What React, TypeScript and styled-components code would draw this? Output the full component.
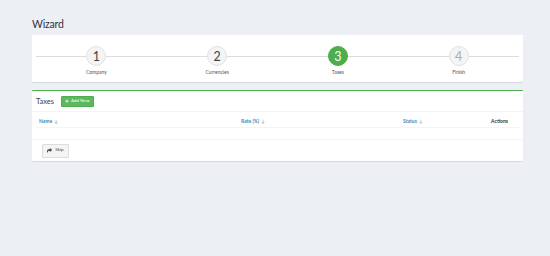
import styled, { createGlobalStyle } from "styled-components";
import { FaPlus, FaShare } from "react-icons/fa";

const GlobalStyle = createGlobalStyle`
  body {
    margin: 0;
    background: #ecf0f5;
    font-family: Lato, "Liberation Sans", sans-serif;
    color: #333;
  }
`;

const Page = styled.div`
  width: 491px;
  padding: 17px 0 0 32px;
`;

const PageTitle = styled.h1`
  margin: 0 0 4px;
  font-size: 10.5px;
  line-height: 14px;
  font-weight: 400;
  letter-spacing: -0.2px;
`;

const Box = styled.div<{ $accent?: string }>`
  background: #fff;
  border-top: ${(p) => (p.$accent ? `1px solid ${p.$accent}` : "none")};
  border-radius: 1px;
  box-shadow: 0 1px 1px rgba(0, 0, 0, 0.1);
  margin-bottom: 8px;
`;

const Steps = styled.div`
  display: grid;
  grid-template-columns: repeat(4, 1fr);
  padding: 11px 4px 7px;
`;

const Step = styled.div`
  position: relative;
  display: flex;
  flex-direction: column;
  align-items: center;

  &::before {
    content: "";
    position: absolute;
    left: 0;
    right: 0;
    top: 10px;
    height: 1px;
    background: #ddd;
  }
`;

const Circle = styled.div<{ $active?: boolean; $muted?: boolean }>`
  position: relative;
  z-index: 1;
  width: 18px;
  height: 18px;
  border-radius: 50%;
  display: flex;
  align-items: center;
  justify-content: center;
  font-size: 12.5px;
  background: ${(p) => (p.$active ? "#4cae4c" : "#f4f4f4")};
  border: 1px solid ${(p) => (p.$active ? "#4cae4c" : "#e2e2e2")};
  color: ${(p) => (p.$active ? "#fff" : p.$muted ? "#aaa" : "#444")};
`;

const StepLabel = styled.div`
  margin-top: 3px;
  font-size: 5px;
  line-height: 6px;
  color: #555;
`;

const BoxHeader = styled.div`
  display: flex;
  align-items: center;
  gap: 7px;
  height: 20px;
  padding: 0 4px;
  border-bottom: 1px solid #f4f4f4;
`;

const BoxTitle = styled.span`
  font-size: 7.5px;
  color: #444;
`;

const Button = styled.button<{ $variant?: "success" | "default" }>`
  display: inline-flex;
  align-items: center;
  justify-content: center;
  font-family: inherit;
  font-size: 4.5px;
  line-height: 1;
  border-radius: 1px;
  cursor: pointer;
  background: ${(p) => (p.$variant === "success" ? "#5cb85c" : "#f4f4f4")};
  border: 1px solid ${(p) => (p.$variant === "success" ? "#4cae4c" : "#ddd")};
  color: ${(p) => (p.$variant === "success" ? "#fff" : "#444")};
`;

const AddButton = styled(Button)`
  height: 11px;
  padding: 0 3px;
  gap: 2px;
`;

const SkipButton = styled(Button)`
  height: 14px;
  width: 27px;
  padding: 0;
  gap: 3px;
`;

const BoxBody = styled.div`
  padding: 3px 4px 11px;
  border-bottom: 1px solid #f4f4f4;
`;

const Table = styled.table`
  width: 100%;
  table-layout: fixed;
  border-collapse: collapse;
  font-size: 5px;
`;

const Th = styled.th<{ $w?: number; $right?: boolean }>`
  box-sizing: border-box;
  width: ${(p) => (p.$w ? `${p.$w}px` : "auto")};
  height: 12px;
  padding: 0 ${(p) => (p.$right ? "11px" : "3px")} 0 3px;
  text-align: ${(p) => (p.$right ? "right" : "left")};
  font-size: 5px;
  line-height: 6px;
  font-weight: 700;
  color: ${(p) => (p.$right ? "#333" : "#3c8dbc")};
  border-bottom: 1px solid #f4f4f4;
  white-space: nowrap;
`;

const SortArrow = styled.span`
  color: #888;
  font-weight: 400;
  margin-left: 2px;
`;

const BoxFooter = styled.div`
  display: flex;
  padding: 4px 10px 3px;
`;

const steps = [
  { n: 1, label: "Company" },
  { n: 2, label: "Currencies" },
  { n: 3, label: "Taxes", active: true },
  { n: 4, label: "Finish", muted: true },
];

const columns = [
  { title: "Name", w: 202 },
  { title: "Rate (%)", w: 162 },
  { title: "Status", w: 88 },
];

export default function App() {
  return (
    <>
      <GlobalStyle />
      <Page>
        <PageTitle>Wizard</PageTitle>
        <Box>
          <Steps>
            {steps.map((s) => (
              <Step key={s.n}>
                <Circle $active={s.active} $muted={s.muted}>
                  {s.n}
                </Circle>
                <StepLabel>{s.label}</StepLabel>
              </Step>
            ))}
          </Steps>
        </Box>
        <Box $accent="#4cae4c">
          <BoxHeader>
            <BoxTitle>Taxes</BoxTitle>
            <AddButton $variant="success">
              <FaPlus size={4} />
              Add New
            </AddButton>
          </BoxHeader>
          <BoxBody>
            <Table>
              <thead>
                <tr>
                  {columns.map((c) => (
                    <Th key={c.title} $w={c.w}>
                      {c.title}
                      <SortArrow>↓</SortArrow>
                    </Th>
                  ))}
                  <Th $right>Actions</Th>
                </tr>
              </thead>
            </Table>
          </BoxBody>
          <BoxFooter>
            <SkipButton>
              <FaShare size={5} />
              Skip
            </SkipButton>
          </BoxFooter>
        </Box>
      </Page>
    </>
  );
}
